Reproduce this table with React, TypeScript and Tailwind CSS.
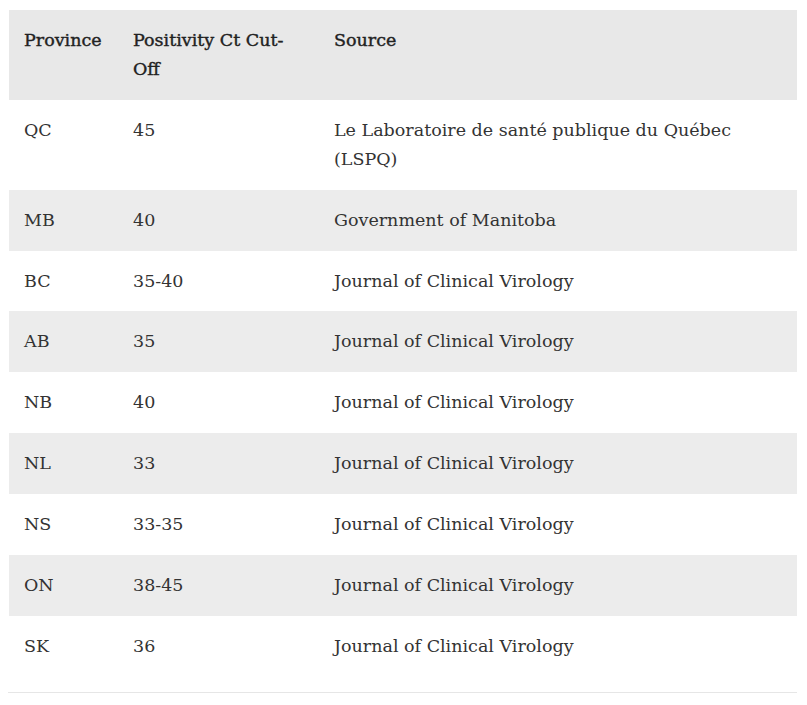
const rows: [string, string, string][] = [
  ["QC", "45", "Le Laboratoire de santé publique du Québec (LSPQ)"],
  ["MB", "40", "Government of Manitoba"],
  ["BC", "35-40", "Journal of Clinical Virology"],
  ["AB", "35", "Journal of Clinical Virology"],
  ["NB", "40", "Journal of Clinical Virology"],
  ["NL", "33", "Journal of Clinical Virology"],
  ["NS", "33-35", "Journal of Clinical Virology"],
  ["ON", "38-45", "Journal of Clinical Virology"],
  ["SK", "36", "Journal of Clinical Virology"],
];

export default function App() {
  return (
    <div className="min-h-screen bg-white pt-[10px] pl-[9px] pr-[10px] font-['DejaVu_Serif',serif] text-[17.5px] leading-[28.9px] text-[#333]">
      <table className="w-[788px] table-fixed border-collapse">
        <colgroup>
          <col className="w-[109px]" />
          <col className="w-[201px]" />
          <col />
        </colgroup>
        <thead>
          <tr className="bg-[#e8e8e8] text-left align-top text-[#222]">
            <th className="px-[15px] py-4 font-normal [-webkit-text-stroke:0.4px_#222]">Province</th>
            <th className="px-[15px] py-4 font-normal [-webkit-text-stroke:0.4px_#222]">
              Positivity Ct Cut-
              <br />
              Off
            </th>
            <th className="px-[15px] py-4 font-normal [-webkit-text-stroke:0.4px_#222]">Source</th>
          </tr>
        </thead>
        <tbody>
          {rows.map(([p, ct, src], i) => (
            <tr
              key={p}
              className={
                i % 2 === 1
                  ? "bg-[#ececec] align-top"
                  : "bg-white align-top"
              }
            >
              <td className="px-[15px] py-4">{p}</td>
              <td className="px-[15px] py-4">{ct}</td>
              <td className="px-[15px] py-4 pr-[60px]">{src}</td>
            </tr>
          ))}
        </tbody>
      </table>
      <div className="mt-[15px] h-px w-[789px] -ml-px bg-[#e6e6e6]" />
    </div>
  );
}
